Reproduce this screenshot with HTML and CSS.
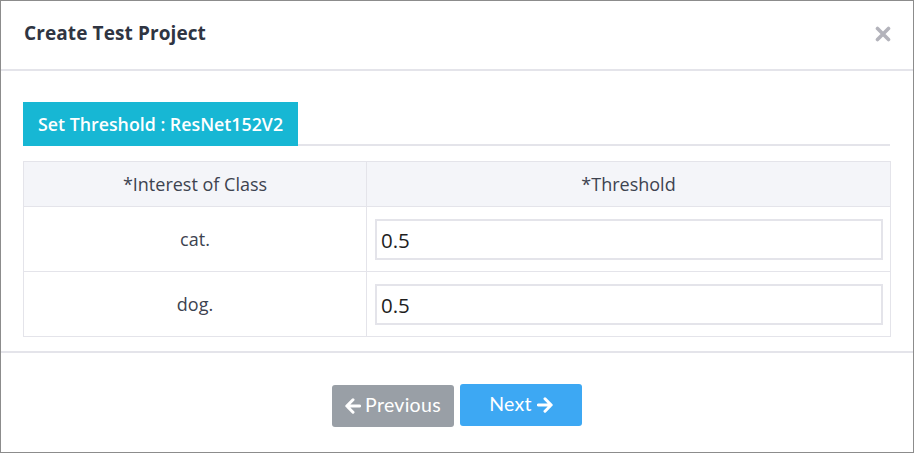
FILE: index.html
```html
<!DOCTYPE html>
<html>
<head>
<meta charset="utf-8">
<link rel="stylesheet" href="styles.css">
</head>
<body>
<div class="modal">
  <div class="modal-header">
    <h1 class="title">Create Test Project</h1>
    <svg class="close" viewBox="0 0 16 16" width="16" height="16"><path d="M2.5 2.5L13.5 13.5M13.5 2.5L2.5 13.5" stroke="#b3b3bb" stroke-width="3.6" stroke-linecap="round"/></svg>
  </div>
  <div class="modal-body">
    <div class="tabbar"><div class="tab">Set Threshold : ResNet152V2</div></div>
    <table class="grid">
      <thead>
        <tr><th class="c1">*Interest of Class</th><th>*Threshold</th></tr>
      </thead>
      <tbody>
        <tr><td class="c1">cat.</td><td class="inp"><input class="field" type="text" value="0.5"></td></tr>
        <tr><td class="c1">dog.</td><td class="inp"><input class="field" type="text" value="0.5"></td></tr>
      </tbody>
    </table>
  </div>
  <div class="modal-footer">
    <button class="btn prev"><svg class="arr" viewBox="0 0 16 16" width="16" height="16"><path d="M14.6 8H2M8 1.8L1.8 8L8 14.2" fill="none" stroke="#fff" stroke-width="3" stroke-linecap="round" stroke-linejoin="round"/></svg>Previous</button>
    <button class="btn next">Next<svg class="arr" viewBox="0 0 16 16" width="16" height="16"><path d="M1.4 8H14M8 1.8L14.2 8L8 14.2" fill="none" stroke="#fff" stroke-width="3" stroke-linecap="round" stroke-linejoin="round"/></svg></button>
  </div>
</div>
</body>
</html>
```
FILE: styles.css
```css
html, body { margin: 0; padding: 0; background: #fff; }
.modal {
  width: 914px; height: 453px; box-sizing: border-box;
  border: 1px solid #8c8c8c;
  font-family: "Open Sans", "Liberation Sans", sans-serif;
  display: flex; flex-direction: column;
}
.modal-header {
  height: 70px; box-sizing: border-box;
  border-bottom: 2px solid #e4e4ea;
  display: flex; align-items: center; justify-content: space-between;
  padding: 0 22px 4px 23px;
}
.title { margin: 0; font-size: 19px; font-weight: 700; color: #2f3542; letter-spacing: 0.1px; }
.close { display: block; margin-top: 2px; }
.modal-body { padding: 31px 22px 0 22px; height: 282px; box-sizing: border-box; border-bottom: 2px solid #e4e4ea; }
.tabbar { border-bottom: 2px solid #e4e4ea; display: flex; margin-right: 1px; }
.tab {
  background: #17b7d4; color: #fff; font-size: 17.8px; font-weight: 600;
  height: 44px; width: 275px; box-sizing: border-box; padding-left: 15px;
  display: flex; align-items: center; margin-bottom: -2px;
}
.grid {
  margin-top: 15px; width: 868px; border-collapse: collapse;
  font-size: 18px; color: #3d4350;
}
.grid th, .grid td { border: 1px solid #e4e4ea; text-align: center; padding: 0; }
.grid th { background: #f4f5f9; font-weight: 400; height: 44px; }
.grid td { height: 64px; }
.grid .c1 { width: 342px; }
.grid td.inp { padding: 0 7px 0 8px; text-align: left; }
.field {
  width: 100%; height: 41px; box-sizing: border-box;
  border: 2px solid #e4e4ea; padding: 2px 4px 0;
  font-family: "Open Sans", sans-serif; font-size: 20.5px; color: #1e1e1e;
  outline: none; display: block;
}
.modal-footer { flex: 1; display: flex; justify-content: center; align-items: flex-start; gap: 6px; padding-top: 31px; }
.btn {
  border: none; border-radius: 3px; color: #fff; height: 42px; width: 122px;
  font-family: "Lato", "Noto Sans", sans-serif; font-size: 19.5px; letter-spacing: 0.3px;
  display: flex; align-items: center; justify-content: center; gap: 4px; padding: 0 0 3px;
}
.prev { background: #999fa6; margin-top: 1px; }
.next { background: #3da8f3; gap: 5px; }
.arr { display: block; margin-top: 2px; }
```
